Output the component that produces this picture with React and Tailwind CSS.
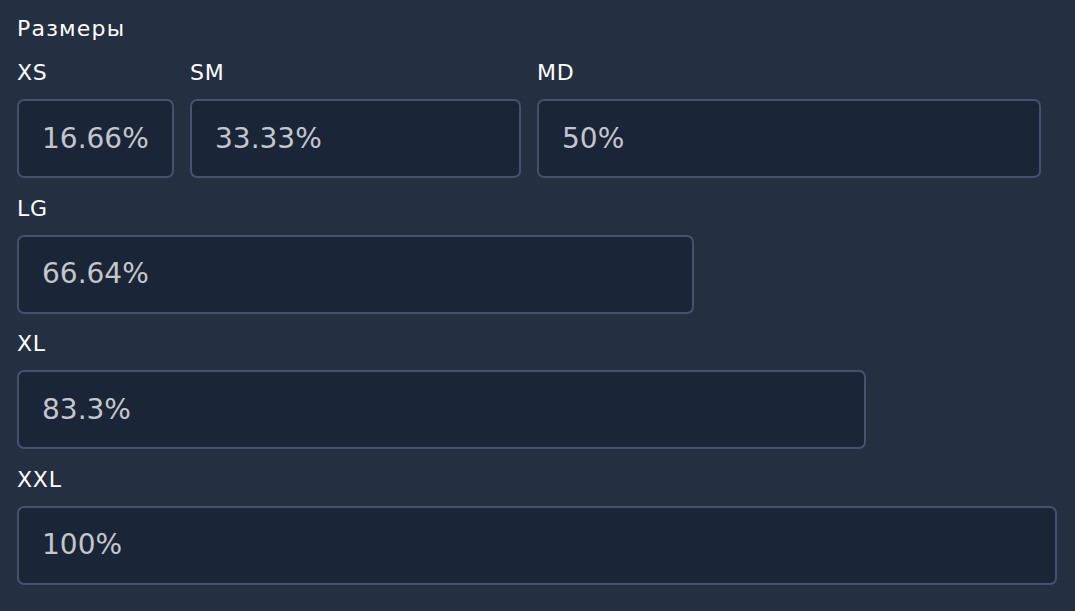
import React from 'react'

const rows = [
  [
    { label: 'XS', value: '16.66%', width: 'w-[157px]' },
    { label: 'SM', value: '33.33%', width: 'w-[331px]' },
    { label: 'MD', value: '50%', width: 'w-[504px]' },
  ],
  [{ label: 'LG', value: '66.64%', width: 'w-[677px]' }],
  [{ label: 'XL', value: '83.3%', width: 'w-[849px]' }],
  [{ label: 'XXL', value: '100%', width: 'w-[1040px]' }],
]

function SizeField({ label, value, width }) {
  return (
    <div className={`flex flex-col ${width}`}>
      <label className="mb-[11px] h-[30px] text-[22px] leading-[30px] tracking-[0.8px] text-white">
        {label}
      </label>
      <div className="flex h-[79px] items-center rounded-[7px] border-2 border-[#465170] bg-[#1b2538] pl-[23px] text-[28px] text-[#c3c6cc]">
        {value}
      </div>
    </div>
  )
}

export default function App() {
  return (
    <div
      className="min-h-screen w-full bg-[#252f42] pl-[17px] pt-[14px]"
      style={{ fontFamily: '"DejaVu Sans", "Liberation Sans", sans-serif' }}
    >
      <div className="h-[30px] text-[22px] leading-[30px] tracking-[1.2px] text-white">
        Размеры
      </div>
      <div className="mt-[14px] flex flex-col gap-[15.5px]">
        {rows.map((row, i) => (
          <div key={i} className="flex gap-4">
            {row.map((field) => (
              <SizeField key={field.label} {...field} />
            ))}
          </div>
        ))}
      </div>
    </div>
  )
}
